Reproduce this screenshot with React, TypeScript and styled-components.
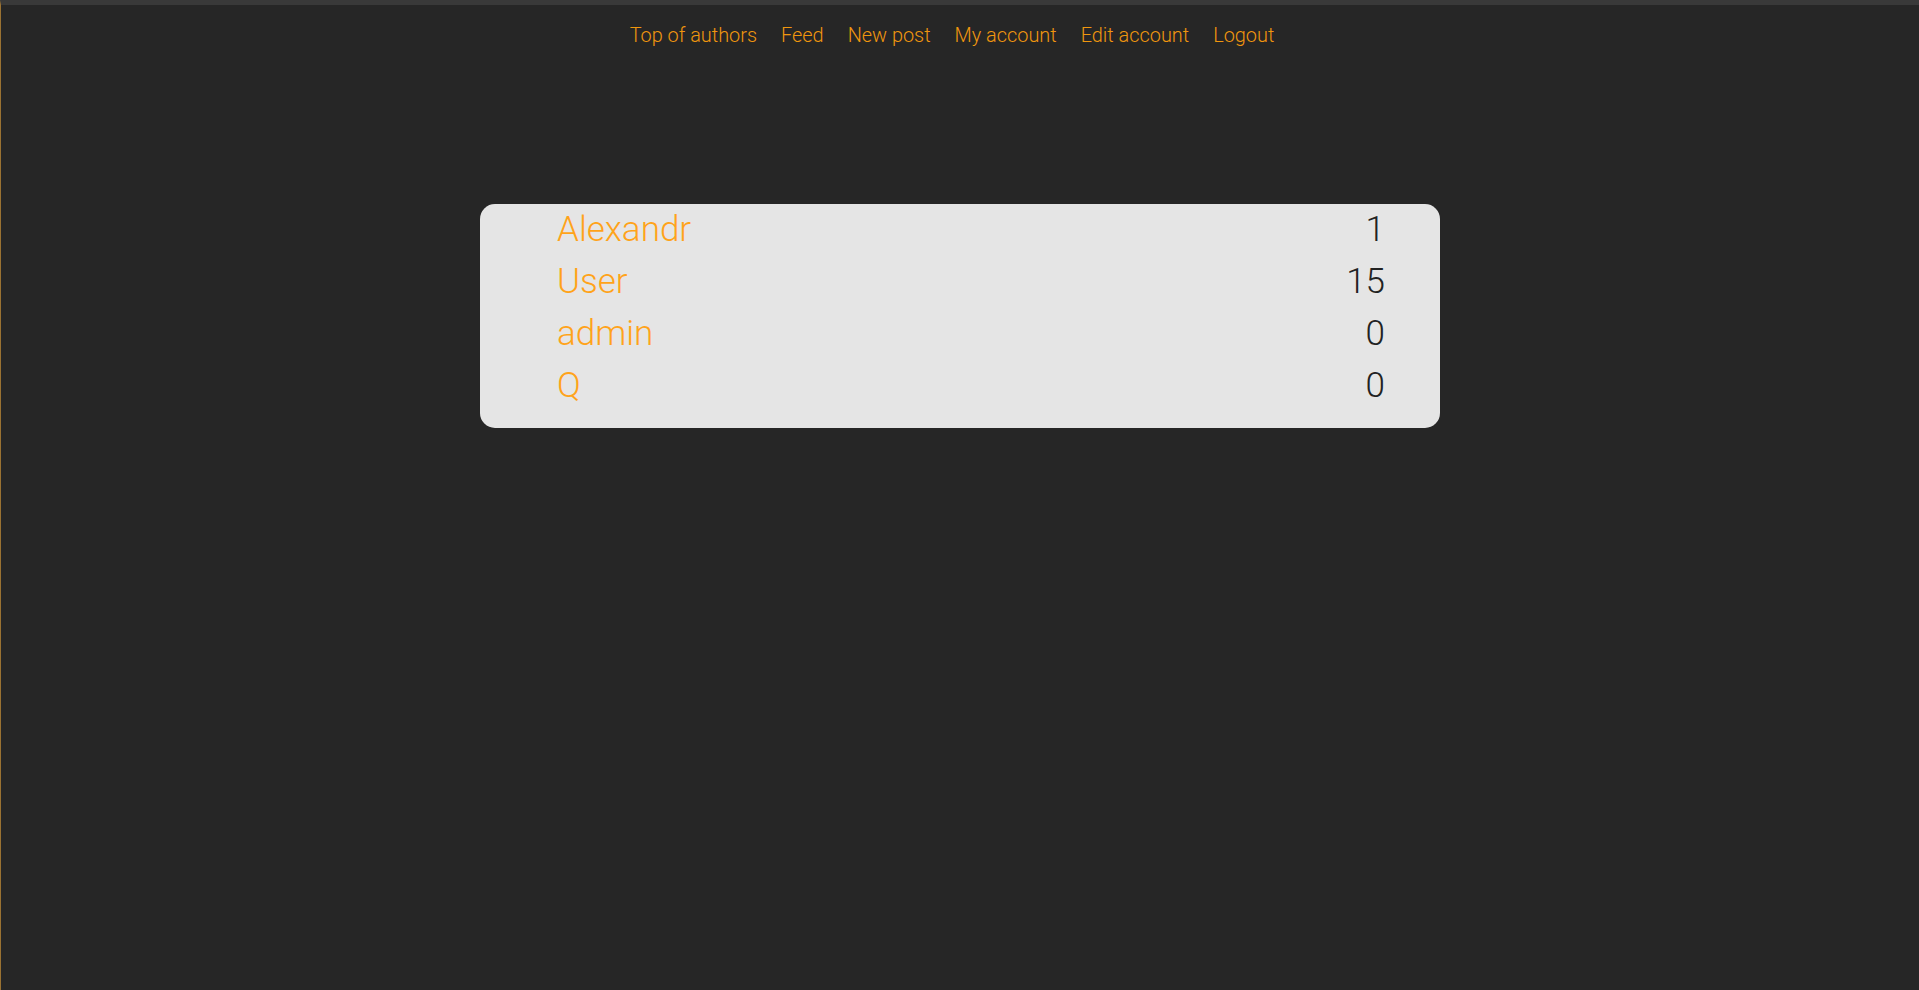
import React from "react";
import styled, { createGlobalStyle } from "styled-components";

const Global = createGlobalStyle`
  html, body { margin: 0; padding: 0; background: #262626; }
  body { font-family: Roboto, "Liberation Sans", sans-serif; }
  * { box-sizing: border-box; }
`;

const Page = styled.div`
  min-height: 100vh;
  background: #262626;
  border-top: 5px solid #393939;
  border-left: 1px solid #9a7232;
`;

const Nav = styled.nav`
  display: flex;
  justify-content: center;
  gap: 24px;
  padding: 19px 16px 0 0;
  height: 204px;
`;

const NavLink = styled.a`
  font-family: Roboto, "Liberation Sans", sans-serif;
  font-weight: 300;
  font-size: 19.9px;
  line-height: 23px;
  color: #f0960e;
  text-decoration: none;
  cursor: pointer;
`;

const Card = styled.div`
  width: 960px;
  margin: -5px auto 0;
  background: #e5e5e5;
  border-radius: 15px;
  padding: 0 55px 16px 77px;
`;

const Row = styled.div`
  display: flex;
  justify-content: space-between;
  align-items: baseline;
  height: 52px;
  line-height: 52px;
  font-family: Roboto, "Liberation Sans", sans-serif;
  font-weight: 300;
  font-size: 35px;
`;

const Name = styled.a`
  color: #ffa31a;
  text-decoration: none;
`;

const Count = styled.span`
  color: #222222;
`;

const authors = [
  { name: "Alexandr", count: 1 },
  { name: "User", count: 15 },
  { name: "admin", count: 0 },
  { name: "Q", count: 0 },
];

const links = ["Top of authors", "Feed", "New post", "My account", "Edit account", "Logout"];

export default function App() {
  return (
    <Page>
      <Global />
      <Nav>
        {links.map((l) => (
          <NavLink key={l}>{l}</NavLink>
        ))}
      </Nav>
      <Card>
        {authors.map((a) => (
          <Row key={a.name}>
            <Name>{a.name}</Name>
            <Count>{a.count}</Count>
          </Row>
        ))}
      </Card>
    </Page>
  );
}
